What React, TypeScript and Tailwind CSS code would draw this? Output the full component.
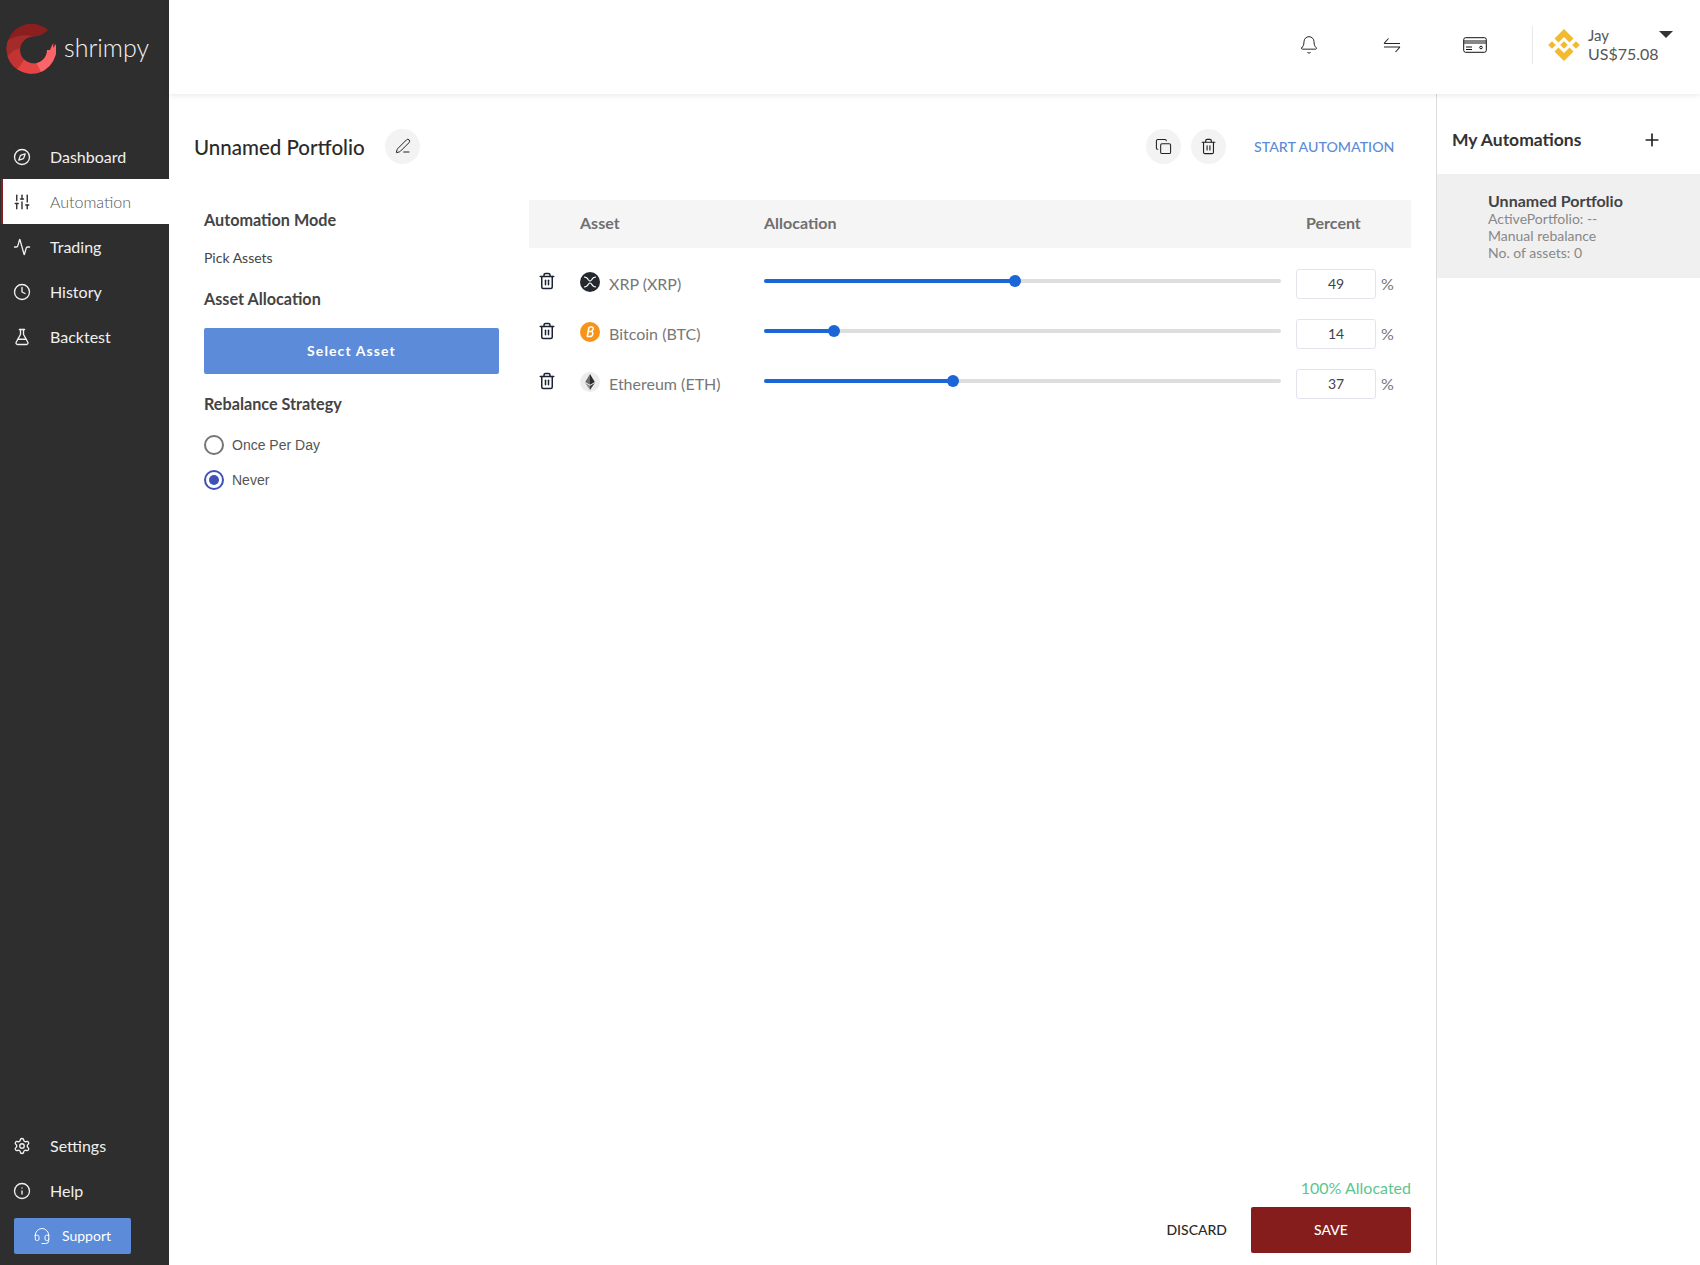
import { Activity, Bell, Clock, Compass, Copy, FlaskConical, Headset, Info, PenLine, Plus, Settings, SlidersVertical, Trash2 } from "lucide-react";
import type { ReactNode } from "react";

type NavItem = {
  label: string;
  icon: ReactNode;
  active?: boolean;
};

type AssetRow = {
  name: string;
  percent: number;
  thumb: number;
  icon: ReactNode;
};

function ShrimpyLogo() {
  const ring = "M42 6 A25 25 0 1 0 50 20 L47 24 L47.5 18 L44 26 L41 26 A13.5 13.5 0 1 1 28 12.5 Q36 12 42 6 Z";
  return (
    <svg width="50" height="50" viewBox="0 0 50 50" className="shrink-0">
      <defs>
        <clipPath id="shrimpy-ring">
          <path d={ring} />
        </clipPath>
      </defs>
      <g clipPath="url(#shrimpy-ring)">
        <rect width="50" height="50" fill="#8a1f1f" />
        <path d="M0 18 Q12 8 30 13 L22 50 L0 50 Z" fill="#a52a2a" />
        <path d="M0 34 Q10 22 20 24 L26 50 L0 50 Z" fill="#c23434" />
        <path d="M8 50 L18 36 L34 38 L40 50 Z" fill="#e44444" />
        <path d="M30 38 L44 22 L52 16 L52 50 L36 50 Z" fill="#fb6468" />
      </g>
    </svg>
  );
}

function BinanceLogo() {
  return (
    <svg width="32" height="32" viewBox="0 0 32 32" fill="#f3ba2f" className="shrink-0">
      <path d="M16 0 L25.5 9.5 L21.5 13.5 L16 8 L10.5 13.5 L6.5 9.5 Z" />
      <path d="M16 32 L6.5 22.5 L10.5 18.5 L16 24 L21.5 18.5 L25.5 22.5 Z" />
      <path d="M16 12.2 L19.8 16 L16 19.8 L12.2 16 Z" />
      <path d="M4 12.2 L7.8 16 L4 19.8 L0.2 16 Z" />
      <path d="M28 12.2 L31.8 16 L28 19.8 L24.2 16 Z" />
    </svg>
  );
}

function SwapIcon() {
  return (
    <svg width="18" height="16" viewBox="0 0 18 16" fill="none" stroke="#222" strokeWidth="1.1" className="shrink-0">
      <path d="M1 6.5 H17 M1 6.5 L5.5 1.5" />
      <path d="M17 10 H1 M17 10 L12.5 15" />
    </svg>
  );
}

function CardIcon() {
  return (
    <svg width="24" height="16" viewBox="0 0 24 16" fill="none" stroke="#111" strokeWidth="1" className="shrink-0">
      <rect x="0.7" y="0.7" width="22.6" height="14.6" rx="2" />
      <path d="M1 4 H23 M1 6 H23" />
      <path d="M3 10 H9 M3 12.5 H9" />
      <circle cx="18" cy="10.5" r="1.3" />
    </svg>
  );
}

function XrpIcon() {
  return (
    <svg width="20" height="20" viewBox="0 0 20 20" className="shrink-0">
      <circle cx="10" cy="10" r="10" fill="#23292f" />
      <path d="M4 5 Q7 5 8.5 8 Q10 10 11.5 8 Q13 5 16 5 M4 15 Q7 15 8.5 12 Q10 10 11.5 12 Q13 15 16 15" fill="none" stroke="#fff" strokeWidth="1.1" />
    </svg>
  );
}

function BitcoinIcon() {
  return (
    <svg width="20" height="20" viewBox="0 0 20 20" className="shrink-0">
      <circle cx="10" cy="10" r="10" fill="#f7931a" />
      <path d="M7.2 15 L9 5 M9.4 5 H11.6 Q13.6 5.2 13.2 7.2 Q12.9 9 11 9.4 Q13.2 9.6 12.8 11.8 Q12.4 14.4 9.8 14.6 H7 M8.6 9.6 H11" fill="none" stroke="#fff" strokeWidth="1.5" />
    </svg>
  );
}

function EthereumIcon() {
  return (
    <svg width="20" height="20" viewBox="0 0 20 20" className="shrink-0">
      <circle cx="10" cy="10" r="10" fill="#ececec" />
      <path d="M10 2 L5.2 10 L10 12.8 Z" fill="#6b6b6b" />
      <path d="M10 2 L14.8 10 L10 12.8 Z" fill="#2b2b2b" />
      <path d="M5.2 11 L10 18 L10 13.8 Z" fill="#8a8a8a" />
      <path d="M14.8 11 L10 18 L10 13.8 Z" fill="#3f3f3f" />
    </svg>
  );
}

const mainNav: NavItem[] = [
  { label: "Dashboard", icon: <Compass size={18} strokeWidth={1.8} /> },
  { label: "Automation", icon: <SlidersVertical size={18} strokeWidth={1.9} color="#333" />, active: true },
  { label: "Trading", icon: <Activity size={18} strokeWidth={1.8} /> },
  { label: "History", icon: <Clock size={18} strokeWidth={1.8} /> },
  { label: "Backtest", icon: <FlaskConical size={18} strokeWidth={1.8} /> },
];

const bottomNav: NavItem[] = [
  { label: "Settings", icon: <Settings size={18} strokeWidth={1.8} /> },
  { label: "Help", icon: <Info size={18} strokeWidth={1.8} /> },
];

const assets: AssetRow[] = [
  { name: "XRP (XRP)", percent: 49, thumb: 251, icon: <XrpIcon /> },
  { name: "Bitcoin (BTC)", percent: 14, thumb: 70, icon: <BitcoinIcon /> },
  { name: "Ethereum (ETH)", percent: 37, thumb: 189, icon: <EthereumIcon /> },
];

function NavLink({ item }: { item: NavItem }) {
  return (
    <div
      className={
        item.active
          ? "ml-px flex h-[45px] items-center border-l-2 border-[#8a1d1d] bg-white text-[#555]"
          : "flex h-[45px] items-center pl-[3px] text-[#f0f0f0]"
      }
    >
      <span className="flex w-[47px] items-center pl-[10px]">{item.icon}</span>
      <span className={item.active ? "text-[16px] font-light" : "text-[16px]"}>{item.label}</span>
    </div>
  );
}

function Sidebar() {
  return (
    <aside className="flex w-[169px] shrink-0 flex-col bg-[#2e2e2e]">
      <div className="flex items-center gap-[8px] pl-[6px] pt-[24px]">
        <ShrimpyLogo />
        <span className="-mt-[2px] text-[25px] font-light text-[#f2f2f2]">shrimpy</span>
      </div>
      <nav className="mt-[60px]">
        {mainNav.map((item) => (
          <NavLink key={item.label} item={item} />
        ))}
      </nav>
      <div className="mt-auto pb-[11px]">
        {bottomNav.map((item) => (
          <NavLink key={item.label} item={item} />
        ))}
        <button
          type="button"
          className="ml-[14px] mt-[5px] flex h-[36px] w-[117px] items-center rounded-[2px] bg-[#5b8bd9] pl-[19px] text-[14px] text-white"
        >
          <Headset size={18} strokeWidth={1.3} />
          <span className="mb-[2px] ml-[11px]">Support</span>
        </button>
      </div>
    </aside>
  );
}

function TopBar() {
  return (
    <header className="relative z-10 flex h-[94px] shrink-0 items-center bg-white pb-[5px] pl-[1131px] shadow-[0_1px_6px_rgba(0,0,0,0.1)]">
      <span className="-ml-[1px] flex w-[20px] justify-center">
        <Bell size={22} strokeWidth={1.1} color="#111" />
      </span>
      <span className="ml-[64px] flex w-[18px] justify-center">
        <SwapIcon />
      </span>
      <span className="ml-[62px]">
        <CardIcon />
      </span>
      <span className="ml-[45px] h-[38px] w-px bg-[#e8e8e8]" />
      <span className="ml-[15px]">
        <BinanceLogo />
      </span>
      <div className="relative ml-[8px] text-[#555]">
        <div className="text-[15px] leading-[18px]">Jay</div>
        <div className="text-[16px] leading-[20px]">US$75.08</div>
        <span className="absolute -right-[14px] top-[5px] h-0 w-0 border-x-[7px] border-t-[7px] border-x-transparent border-t-[#333]" />
      </div>
    </header>
  );
}

function CircleButton({ children }: { children: ReactNode }) {
  return <span className="flex h-[35px] w-[35px] items-center justify-center rounded-full bg-[#f3f3f3] text-[#222]">{children}</span>;
}

function SettingsColumn() {
  return (
    <div className="w-[295px] shrink-0 text-[#444]">
      <h3 className="text-[16.2px] leading-[20px] font-bold">Automation Mode</h3>
      <p className="mt-[18px] text-[14px] leading-[20px]">Pick Assets</p>
      <h3 className="mt-[21px] text-[16.2px] leading-[20px] font-bold">Asset Allocation</h3>
      <button
        type="button"
        className="mt-[19px] h-[46px] w-[295px] rounded-[2px] bg-[#5b8bd9] pb-[2px] text-[14px] font-bold tracking-[1.1px] text-white"
      >
        Select Asset
      </button>
      <h3 className="mt-[20px] text-[16.2px] leading-[20px] font-bold">Rebalance Strategy</h3>
      <div className="mt-[21px] flex flex-col gap-[15px] font-['Liberation_Sans',sans-serif] text-[14px] text-[#555]">
        <label className="flex h-[20px] items-center gap-[8px]">
          <span className="h-[20px] w-[20px] rounded-full border-2 border-[#757575]" />
          Once Per Day
        </label>
        <label className="flex h-[20px] items-center gap-[8px]">
          <span className="flex h-[20px] w-[20px] items-center justify-center rounded-full border-2 border-[#3f51b5]">
            <span className="h-[10px] w-[10px] rounded-full bg-[#3f51b5]" />
          </span>
          Never
        </label>
      </div>
    </div>
  );
}

function AllocationRow({ asset }: { asset: AssetRow }) {
  return (
    <div className="flex h-[50px] items-center">
      <span className="flex w-[51px] shrink-0 -translate-y-[3px] pl-[9px] text-[#1a2233]">
        <Trash2 size={18} strokeWidth={2} />
      </span>
      <span className="w-[184px] shrink-0">
        <span className="flex items-center gap-[9px] text-[16px] text-[#777]">
          <span className="-translate-y-[2px]">{asset.icon}</span>
          {asset.name}
        </span>
      </span>
      <div className="relative h-[4px] w-[517px] shrink-0 -translate-y-[3px] rounded-full bg-[#dedede]">
        <div className="h-full rounded-full bg-[#1a66d9]" style={{ width: asset.thumb }} />
        <span
          className="absolute -top-[4px] -ml-[6px] h-[12px] w-[12px] rounded-full bg-[#1a66d9]"
          style={{ left: asset.thumb }}
        />
      </div>
      <span className="ml-[15px] flex h-[30px] w-[80px] shrink-0 items-center justify-center rounded-[3px] border border-[#e3e3ee] pb-[1px] text-[14px] text-[#444]">
        {asset.percent}
      </span>
      <span className="ml-[5px] text-[16px] text-[#777]">%</span>
    </div>
  );
}

function AllocationTable() {
  return (
    <div className="w-[882px] shrink-0">
      <div className="flex h-[48px] items-center bg-[#f5f5f5] pb-[2px] text-[16px] font-bold text-[#6f6f6f]">
        <span className="w-[235px] pl-[51px]">Asset</span>
        <span className="w-[542px]">Allocation</span>
        <span>Percent</span>
      </div>
      <div className="mt-[11px]">
        {assets.map((asset) => (
          <AllocationRow key={asset.name} asset={asset} />
        ))}
      </div>
    </div>
  );
}

function Editor() {
  return (
    <section className="flex w-[1268px] shrink-0 flex-col border-r border-[#dcdcdc] pb-[12px]">
      <div className="flex h-[104px] shrink-0 items-center pl-[25px]">
        <h1 className="w-[191px] pt-[2px] text-[20.5px] font-medium text-[#2a2a2a]">Unnamed Portfolio</h1>
        <CircleButton>
          <PenLine size={16} strokeWidth={1.5} />
        </CircleButton>
        <span className="ml-[726px]">
          <CircleButton>
            <Copy size={17} strokeWidth={1.5} />
          </CircleButton>
        </span>
        <span className="ml-[10px]">
          <CircleButton>
            <Trash2 size={17} strokeWidth={1.6} />
          </CircleButton>
        </span>
        <span className="ml-[28px] pt-[2px] text-[14.2px] font-medium text-[#5b8bd9]">START AUTOMATION</span>
      </div>
      <div className="flex items-start pl-[35px]">
        <div className="pt-[12px]">
          <SettingsColumn />
        </div>
        <div className="ml-[30px] pt-[2px]">
          <AllocationTable />
        </div>
      </div>
      <div className="mt-auto flex flex-col items-end pr-[25px]">
        <span className="text-[16px] leading-[20px] text-[#5cc690]">100% Allocated</span>
        <div className="mt-[9px] flex items-center">
          <span className="mb-[2px] text-[14px] font-medium text-[#2a2a2a]">DISCARD</span>
          <button type="button" className="ml-[24px] h-[46px] w-[160px] rounded-[2px] bg-[#861d1d] pb-[2px] text-[14px] font-medium text-white">
            SAVE
          </button>
        </div>
      </div>
    </section>
  );
}

function AutomationsPanel() {
  return (
    <aside className="flex-1">
      <div className="flex h-[80px] items-center justify-between pl-[15px] pr-[38px] pt-[12px]">
        <h2 className="text-[17.5px] font-bold text-[#333]">My Automations</h2>
        <Plus size={20} strokeWidth={2} color="#222" />
      </div>
      <div className="flex h-[104px] flex-col justify-center bg-[#f0f0f0] pl-[51px] text-[14px] leading-[17px] text-[#888]">
        <div className="text-[16px] leading-[19px] font-bold text-[#444]">Unnamed Portfolio</div>
        <div>ActivePortfolio: --</div>
        <div>Manual rebalance</div>
        <div>No. of assets: 0</div>
      </div>
    </aside>
  );
}

export default function App() {
  return (
    <div className="flex h-[1265px] w-[1700px] overflow-hidden bg-white font-['Lato',sans-serif]">
      <Sidebar />
      <main className="flex min-w-0 flex-1 flex-col">
        <TopBar />
        <div className="flex min-h-0 flex-1">
          <Editor />
          <AutomationsPanel />
        </div>
      </main>
    </div>
  );
}
